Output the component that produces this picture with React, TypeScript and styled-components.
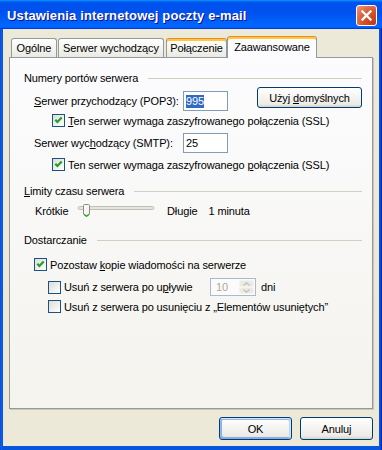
import React from "react";
import styled, { createGlobalStyle, css } from "styled-components";

const Global = createGlobalStyle`
  html, body { margin: 0; padding: 0; background: #ECE9D8; }
  body { font-family: "Liberation Sans", Arial, sans-serif; font-size: 11px; color: #000; letter-spacing: -0.12px; }
  * { box-sizing: border-box; }
`;

const Window = styled.div`
  width: 382px;
  height: 450px;
  display: flex;
  flex-direction: column;
  background: #0842D9;
  overflow: hidden;
`;

const TitleBar = styled.div`
  height: 29px;
  flex: none;
  display: flex;
  align-items: center;
  justify-content: space-between;
  padding: 1px 5px 0 7px;
  background: linear-gradient(180deg, #0997ff, #0053ee 8%, #0050ee 40%, #0066ff 88%, #0066ff 93%, #005bff 95%, #003dd7 96%, #003dd7);
`;

const Title = styled.div`
  color: #fff;
  font-family: "Liberation Sans", Arial, sans-serif;
  font-weight: bold;
  font-size: 13px;
  text-shadow: 1px 1px #0f1089;
  letter-spacing: 0.15px;
`;

const CloseBtn = styled.div`
  width: 21px;
  height: 21px;
  border: 1px solid #fff;
  border-radius: 3px;
  background: radial-gradient(circle at 90% 90%, #c23b17 0%, #d9532d 50%, #ef9a80 100%);
  display: flex;
  align-items: center;
  justify-content: center;
`;

const Frame = styled.div`
  flex: 1;
  display: flex;
  padding: 0 4px 4px 3px;
  background: linear-gradient(90deg, #0831d9, #166aee 1px, #0855dd 2px, #0855dd calc(100% - 2px), #003bda calc(100% - 1px), #00138c);
`;

const Body = styled.div`
  flex: 1;
  background: #ECE9D8;
  display: flex;
  flex-direction: column;
  padding: 7px 6px 6px 6px;
`;

const TabStrip = styled.div`
  height: 21px;
  display: flex;
  align-items: flex-end;
  padding-left: 2px;
`;

const Tab = styled.div<{ $w: number; $ml?: number; $sel?: boolean; $hot?: boolean }>`
  width: ${(p) => p.$w}px;
  margin-left: ${(p) => p.$ml || 0}px;
  height: ${(p) => (p.$sel ? 22 : 19)}px;
  margin-bottom: ${(p) => (p.$sel ? -1 : 0)}px;
  border: 1px solid #919b9c;
  border-bottom: none;
  border-radius: 3px 3px 0 0;
  display: flex;
  align-items: center;
  justify-content: center;
  padding-bottom: ${(p) => (p.$sel ? 2 : 0)}px;
  background: ${(p) => (p.$sel ? "#FCFCFE" : "linear-gradient(180deg, #ffffff, #f3f3ef 60%, #eae9e3)")};
  position: relative;
  z-index: ${(p) => (p.$sel ? 2 : 1)};
  white-space: nowrap;
  ${(p) =>
    (p.$sel || p.$hot) &&
    css`
      border-top-color: #e68b2c;
      box-shadow: inset 0 2px 0 #ffc73c;
    `}
`;

const Panel = styled.div`
  height: 352px;
  flex: none;
  border: 1px solid #919b9c;
  background: linear-gradient(180deg, #fcfcfe, #f4f3ee);
  box-shadow: 1px 1px 0 #c9c7ba;
  padding: 0 10px 0 14px;
  display: flex;
  flex-direction: column;
`;

const GroupHeader = styled.div<{ $mt: number }>`
  height: 14px;
  margin-top: ${(p) => p.$mt}px;
  display: flex;
  align-items: center;
  white-space: nowrap;
`;

const Rule = styled.div`
  flex: 1;
  height: 1px;
  margin-left: 10px;
  background: #d0d0bf;
`;

const Row = styled.div<{ $mt: number; $h: number; $pl: number }>`
  display: flex;
  align-items: center;
  height: ${(p) => p.$h}px;
  margin-top: ${(p) => p.$mt}px;
  padding-left: ${(p) => p.$pl}px;
  white-space: nowrap;
`;

const Label = styled.div<{ $w?: number; $ml?: number }>`
  ${(p) => p.$w !== undefined && css`width: ${p.$w}px; flex: none;`}
  margin-left: ${(p) => p.$ml || 0}px;
`;

const Acc = styled.span`
  text-decoration: underline;
`;

const TextBox = styled.div`
  width: 45px;
  height: 20px;
  flex: none;
  border: 1px solid #7f9db9;
  background: #fff;
  display: flex;
  align-items: center;
  padding-left: 2px;
`;

const Selected = styled.span`
  background: #316ac5;
  color: #fff;
  line-height: 13px;
`;

const XPButton = styled.div<{ $w: number; $def?: boolean; $lift?: number; $ml?: number }>`
  width: ${(p) => p.$w}px;
  height: ${(p) => (p.$lift ? 21 : 23)}px;
  flex: none;
  margin-left: ${(p) => p.$ml || 0}px;
  align-self: ${(p) => (p.$lift ? "flex-start" : "auto")};
  margin-top: ${(p) => (p.$lift ? -p.$lift : 0)}px;
  border: 1px solid #003c74;
  border-radius: 3px;
  background: linear-gradient(180deg, #ffffff, #ecebe6 86%, #d6d0c5);
  display: flex;
  align-items: center;
  justify-content: center;
  white-space: nowrap;
  ${(p) =>
    p.$def &&
    css`
      box-shadow: inset -1px 1px #cee7ff, inset 1px 2px #98b8ea, inset -2px 2px #bcd4f6, inset 1px -1px #89ade4, inset 2px -2px #89ade4;
    `}
`;

const CheckBox = styled.div`
  width: 13px;
  height: 13px;
  flex: none;
  border: 1px solid #1c5180;
  background: linear-gradient(135deg, #dcdcd7, #ffffff);
  display: flex;
  align-items: center;
  justify-content: center;
`;

const CheckText = styled.div`
  margin-left: 3px;
`;

const SliderBox = styled.svg`
  flex: none;
`;

const Spin = styled.div`
  width: 46px;
  height: 18px;
  flex: none;
  border: 1px solid #a7bad0;
  background: #fbfbf9;
  display: flex;
  align-items: stretch;
  padding: 1px;
`;

const SpinValue = styled.div`
  flex: 1;
  color: #aca899;
  display: flex;
  align-items: center;
  padding-left: 4px;
`;

const SpinButtons = styled.div`
  width: 15px;
  display: flex;
  flex-direction: column;
`;

const SpinHalf = styled.div`
  flex: 1;
  background: #ebeae4;
  border: 1px solid #f4f3ef;
  border-radius: 2px;
  display: flex;
  align-items: center;
  justify-content: center;
`;

const ButtonRow = styled.div`
  margin-top: 8px;
  display: flex;
  justify-content: flex-end;
  gap: 8px;
`;

const Check: React.FC<{ checked?: boolean }> = ({ checked }) => (
  <CheckBox>
    {checked && (
      <svg width="11" height="11" viewBox="0 0 11 11">
        <polyline points="2.3,4.8 4.4,7 8.7,2.6" fill="none" stroke="#21a121" strokeWidth="2.2" />
      </svg>
    )}
  </CheckBox>
);

export default function App() {
  return (
    <>
      <Global />
      <Window>
        <TitleBar>
          <Title>Ustawienia internetowej poczty e-mail</Title>
          <CloseBtn>
            <svg width="13" height="13" viewBox="0 0 13 13">
              <path d="M2.5 2.5 L10.5 10.5 M10.5 2.5 L2.5 10.5" stroke="#fff" strokeWidth="2.3" strokeLinecap="square" />
            </svg>
          </CloseBtn>
        </TitleBar>
        <Frame>
          <Body>
            <TabStrip>
              <Tab $w={46}>Ogólne</Tab>
              <Tab $w={106} $ml={1}>Serwer wychodzący</Tab>
              <Tab $w={61} $ml={2} $hot>Połączenie</Tab>
              <Tab $w={90} $sel>Zaawansowane</Tab>
            </TabStrip>
            <Panel>
              <GroupHeader $mt={13}>
                Numery portów serwera
                <Rule />
              </GroupHeader>
              <Row $mt={6} $h={20} $pl={10}>
                <Label $w={149}>
                  <Acc>S</Acc>erwer przychodzący (POP3):
                </Label>
                <TextBox>
                  <Selected>995</Selected>
                </TextBox>
                <XPButton $w={105} $lift={4} $ml={29}>
                  <span>
                    Użyj <Acc>d</Acc>omyślnych
                  </span>
                </XPButton>
              </Row>
              <Row $mt={3} $h={13} $pl={28}>
                <Check checked />
                <CheckText>
                  <Acc>T</Acc>en serwer wymaga zaszyfrowanego połączenia (SSL)
                </CheckText>
              </Row>
              <Row $mt={6} $h={20} $pl={10}>
                <Label $w={149}>
                  Serwer wyc<Acc>h</Acc>odzący (SMTP):
                </Label>
                <TextBox>25</TextBox>
              </Row>
              <Row $mt={5} $h={13} $pl={28}>
                <Check checked />
                <CheckText>
                  Ten serwer wymaga zaszyfrowanego <Acc>p</Acc>ołączenia (SSL)
                </CheckText>
              </Row>

              <GroupHeader $mt={13}>
                <span>
                  <Acc>L</Acc>imity czasu serwera
                </span>
                <Rule />
              </GroupHeader>
              <Row $mt={3} $h={20} $pl={11}>
                <Label $w={41}>Krótkie</Label>
                <SliderBox width="80" height="20" viewBox="0 0 80 20">
                  <rect x="2" y="5.5" width="76" height="3" rx="1.5" fill="#e6e5dc" stroke="#b5b4aa" strokeWidth="0.8" />
                  <path d="M7.5 4.5 Q7.5 3.5 8.5 3.5 L12.5 3.5 Q13.5 3.5 13.5 4.5 L13.5 13 L10.5 15.5 L7.5 13 Z" fill="#f5f5f1" stroke="#8d8c84" strokeWidth="1" />
                  <path d="M8 13.3 L10.5 15.3 L13 13.3" fill="none" stroke="#21a121" strokeWidth="1.2" />
                  <line x1="9" y1="5" x2="9" y2="12" stroke="#ffffff" strokeWidth="1" />
                </SliderBox>
                <Label $ml={11}>Długie</Label>
                <Label $ml={11}>1 minuta</Label>
              </Row>

              <GroupHeader $mt={12}>
                Dostarczanie
                <Rule />
              </GroupHeader>
              <Row $mt={11} $h={13} $pl={10}>
                <Check checked />
                <CheckText>
                  Pozostaw <Acc>k</Acc>opie wiadomości na serwerze
                </CheckText>
              </Row>
              <Row $mt={7} $h={18} $pl={24}>
                <Check />
                <Label $w={146} $ml={3}>
                  Usuń z serwera po u<Acc>p</Acc>ływie
                </Label>
                <Spin>
                  <SpinValue>10</SpinValue>
                  <SpinButtons>
                    <SpinHalf>
                      <svg width="7" height="4" viewBox="0 0 7 4">
                        <path d="M0.5 3.5 L3.5 0.8 L6.5 3.5" fill="none" stroke="#c2c1b8" strokeWidth="1.3" />
                      </svg>
                    </SpinHalf>
                    <SpinHalf>
                      <svg width="7" height="4" viewBox="0 0 7 4">
                        <path d="M0.5 0.5 L3.5 3.2 L6.5 0.5" fill="none" stroke="#c2c1b8" strokeWidth="1.3" />
                      </svg>
                    </SpinHalf>
                  </SpinButtons>
                </Spin>
                <Label $ml={5}>dni</Label>
              </Row>
              <Row $mt={4} $h={13} $pl={24}>
                <Check />
                <CheckText>Usuń z serwera po usunięciu z „Elementów usuniętych”</CheckText>
              </Row>
            </Panel>
            <ButtonRow>
              <XPButton $w={73} $def>OK</XPButton>
              <XPButton $w={73}>Anuluj</XPButton>
            </ButtonRow>
          </Body>
        </Frame>
      </Window>
    </>
  );
}
